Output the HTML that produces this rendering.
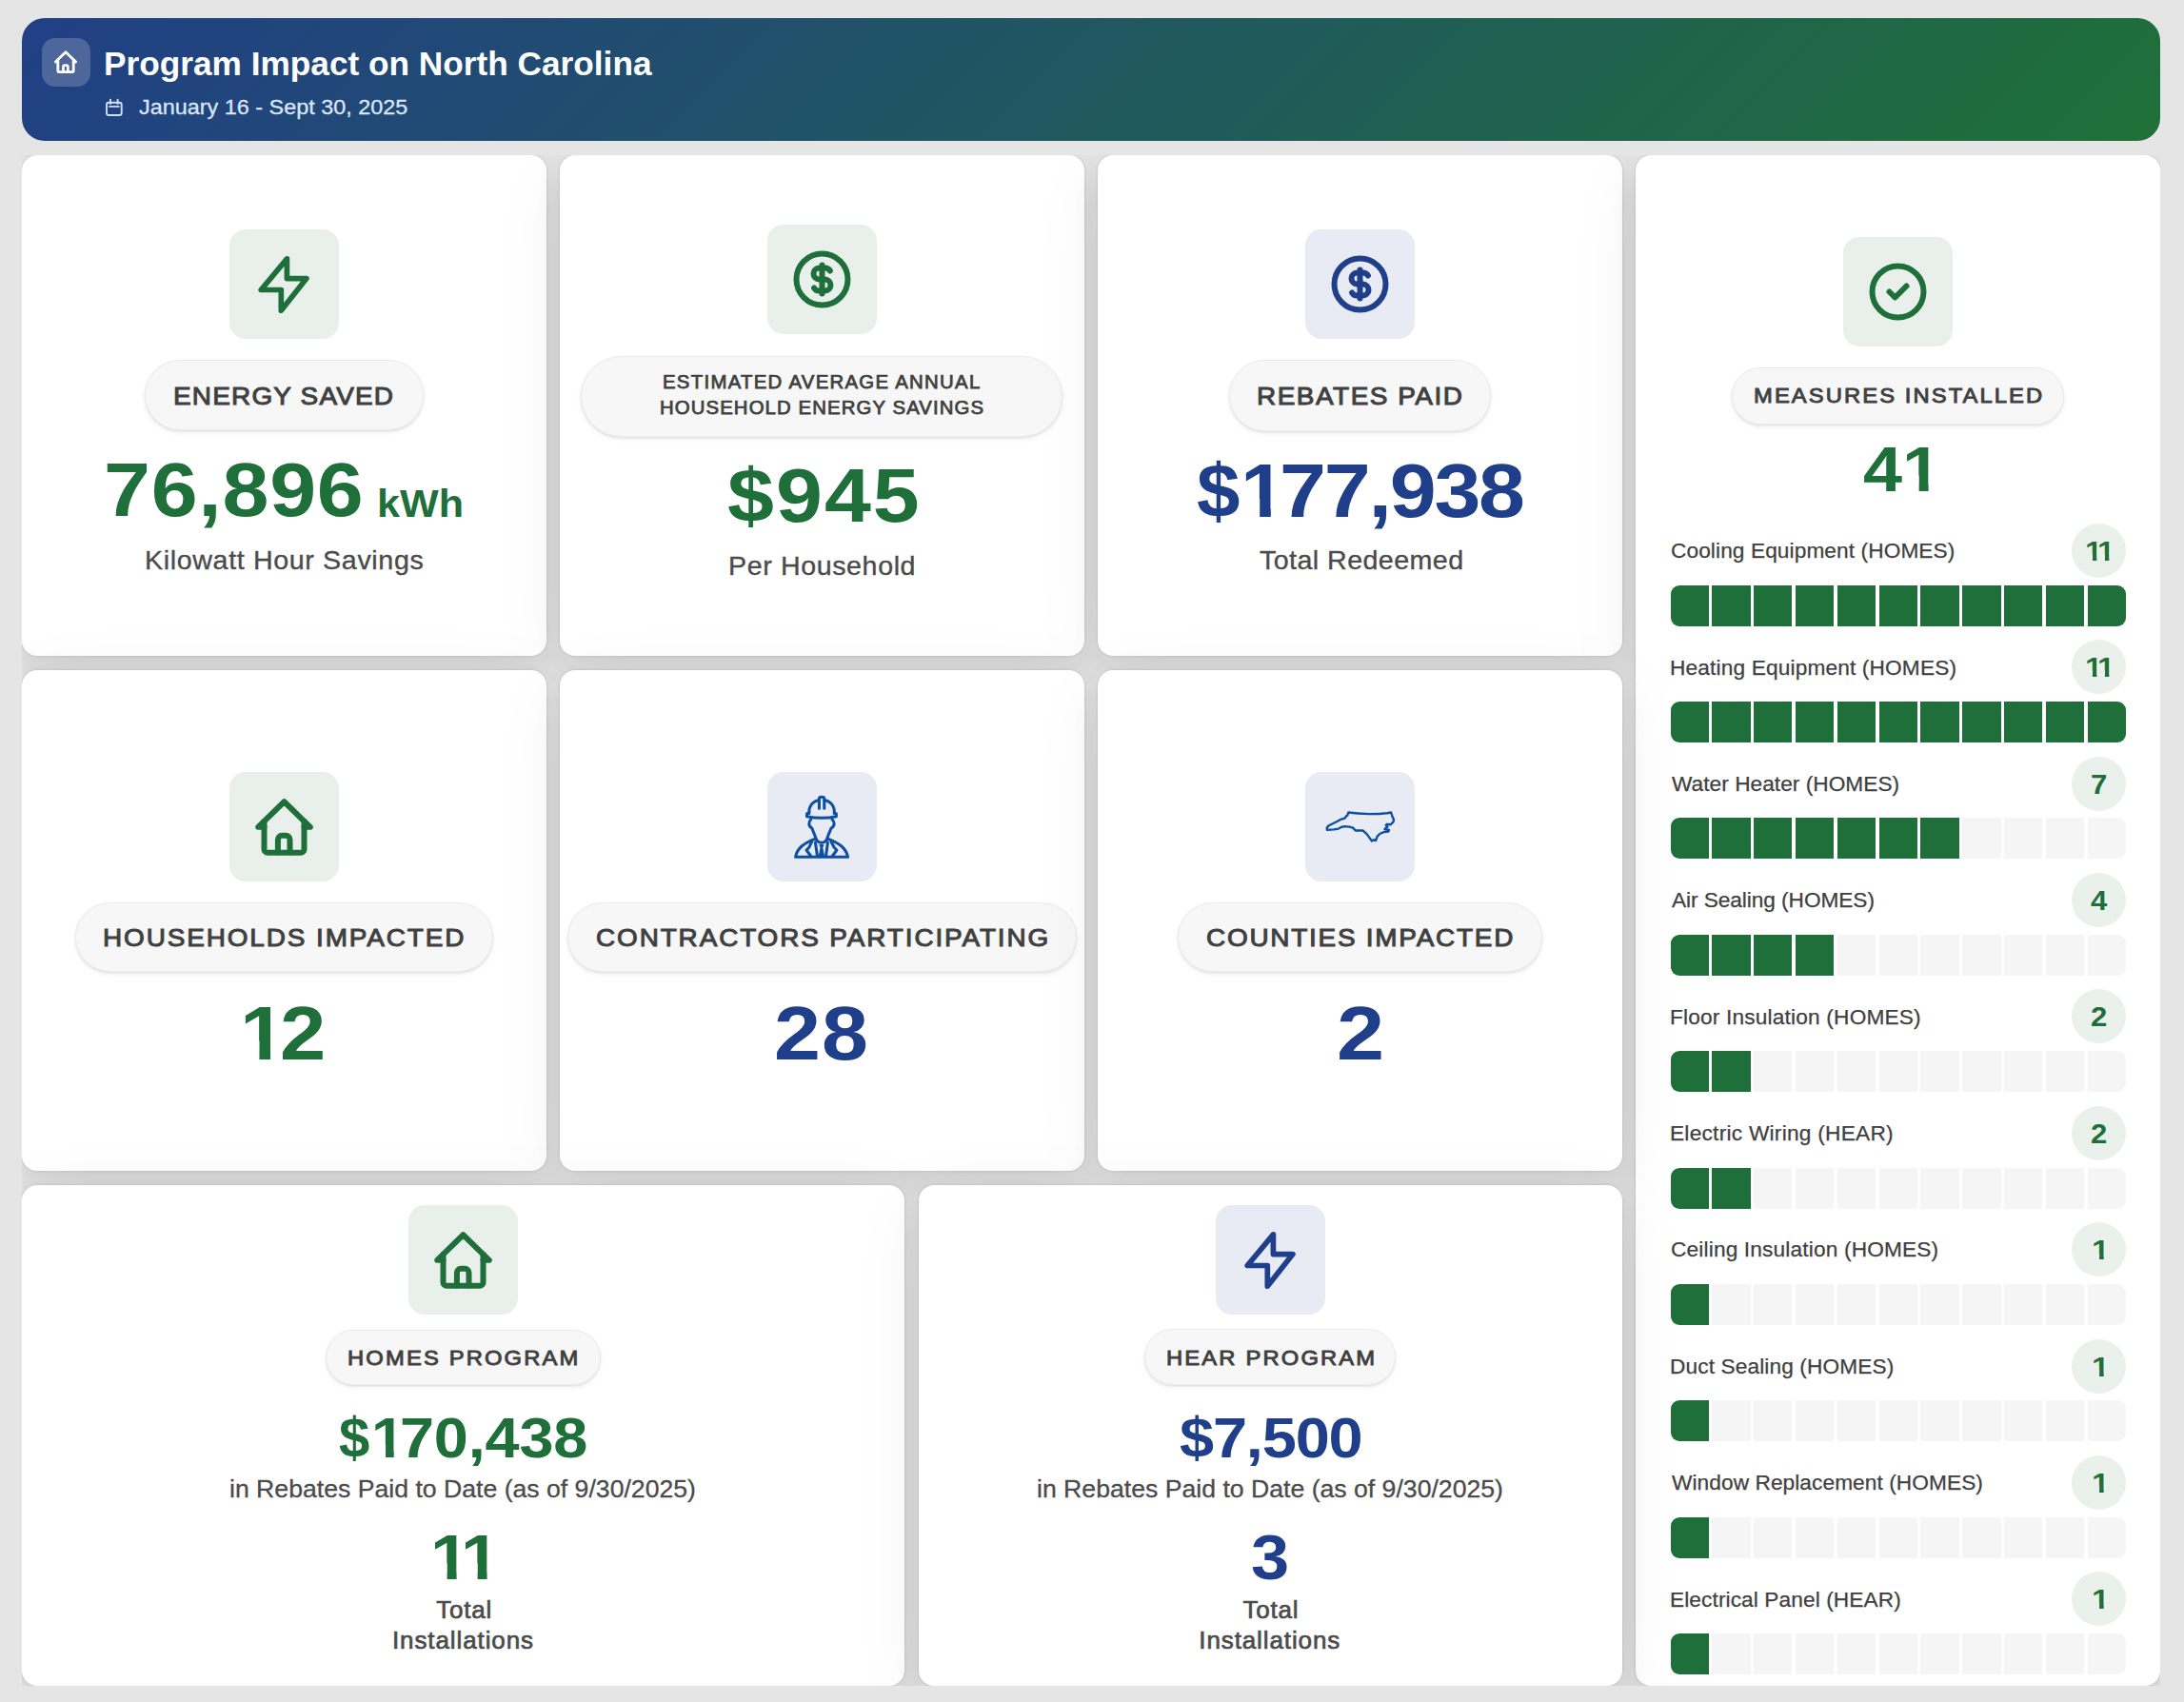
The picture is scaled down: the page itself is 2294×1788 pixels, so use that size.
<!DOCTYPE html>
<html lang="en"><head><meta charset="utf-8"><title>Program Impact on North Carolina</title>
<style>
*{box-sizing:border-box;margin:0;padding:0}
html,body{width:2294px;height:1788px;overflow:hidden;background:#e5e5e5;font-family:"Liberation Sans",Arial,sans-serif}
body{position:relative}
.hdr{position:absolute;left:23px;top:19px;width:2246px;height:129px;border-radius:24px;
 background:linear-gradient(135deg,#213f86 0%,#1f7038 100%);}
.hicon{position:absolute;width:51px;height:51px;border-radius:14px;background:rgba(255,255,255,.2)}
.hicon svg{position:absolute;left:11.4px;top:11.4px;width:28px;height:28px}
.cal{position:absolute;width:22px;height:22px}
.cal svg{width:22px;height:22px;display:block}
.grid{position:absolute;left:23px;top:163px;width:2246px;height:1608px;overflow:hidden}
.card{position:absolute;border-radius:16px;background:#fff;
 box-shadow:0 16px 32px rgba(0,0,0,.06),0 14px 80px rgba(0,0,0,.05),0 0 3px rgba(0,0,0,.15)}
.pill{position:absolute;border-radius:999px;background:#f7f7f7;border:1.5px solid #ececec;box-shadow:0 1.5px 2.5px rgba(0,0,0,.09),0 3px 7px rgba(0,0,0,.04)}
.ibox{position:absolute;width:115px;height:115px;border-radius:17px}
.ibox svg{position:absolute;left:0;top:0;width:115px;height:115px}
.t{position:absolute;white-space:pre;line-height:1;transform-origin:0 0}
.badge{position:absolute;width:57px;height:57px;border-radius:50%;background:#eaf1ec}
.bar{position:absolute;width:478.5px;height:43px;border-radius:9px;overflow:hidden;display:flex;gap:3.5px}
.bar i{flex:1;background:#f5f5f5;display:block}
.bar i.on{background:#1f6f3a}

</style></head><body>
<header class="hdr">
<div class="hicon" style="left:21px;top:21px"><svg viewBox="0 0 24 24" fill="none" stroke="#fff" stroke-width="2.4" stroke-linecap="round" stroke-linejoin="round"><path d="M5 12.1H2.9L12 3.25l9.1 8.85H19"/><path d="M5 10.2V19.9a1.2 1.2 0 0 0 1.2 1.2h11.6a1.2 1.2 0 0 0 1.2-1.2V10.2"/><path d="M9.8 21v-4.5a1.4 1.4 0 0 1 1.4-1.4h1.4a1.4 1.4 0 0 1 1.4 1.4V21"/></svg></div>
<span class="t" style="left:86px;top:30.7px;font-size:35.5px;font-weight:700;color:#fff;transform:scaleX(0.9924);">Program Impact on North Carolina</span>
<div class="cal" style="left:86px;top:83px"><svg viewBox="0 0 22 22" fill="none" stroke="#cfe0ff" stroke-width="1.9" stroke-linecap="round" stroke-linejoin="round"><rect x="3" y="5.7" width="15.7" height="13.3" rx="2.2"/><path d="M7 2.6v4.4M14.6 2.6v4.4M6 9.9h9.8"/></svg></div>
<span class="t" style="left:123.2px;top:82.7px;font-size:21.8px;font-weight:400;color:#dbe6fb;transform:scaleX(1.0737);-webkit-text-stroke:0.3px #dbe6fb;">January 16 - Sept 30, 2025</span>
</header>
<main class="grid">
<section class="card" style="left:0px;top:0px;width:551px;height:526px">
<div class="ibox" style="left:218px;top:78px;background:#e9f0eb;color:#1f6f3a"><svg viewBox="0 0 115 115" fill="none" stroke="currentColor" stroke-width="5.7" stroke-linecap="round" stroke-linejoin="round"><path d="M60.4 30.9L33.2 63.5H54.3V85.2L80.9 51.6H60.4z"/></svg></div>
<div class="pill" style="left:129.4px;top:215px;width:292.4px;height:74.3px"></div>
<span class="t" style="left:158.6px;top:239.5px;font-size:26.6px;font-weight:400;color:#404040;letter-spacing:1.147px;transform:scaleX(1.0500);-webkit-text-stroke:1.0px #404040;">ENERGY SAVED</span>
<span class="t" style="left:85.6px;top:312px;font-size:80px;font-weight:700;color:#1f6f3a;letter-spacing:0.655px;transform:scaleX(1.1000);">76,896</span>
<span class="t" style="left:373.2px;top:345.5px;font-size:41px;font-weight:700;color:#1f6f3a;transform:scaleX(1.0519);">kWh</span>
<span class="t" style="left:128.6px;top:412.1px;font-size:27.4px;font-weight:400;color:#4b4b4b;letter-spacing:0.611px;transform:scaleX(1.0450);-webkit-text-stroke:0.35px #4b4b4b;">Kilowatt Hour Savings</span>
</section>
<section class="card" style="left:565px;top:0px;width:551px;height:526px">
<div class="ibox" style="left:218.3px;top:73.2px;background:#e9f0eb;color:#1f6f3a"><svg viewBox="0 0 115 115" fill="none" stroke="currentColor" stroke-width="2" stroke-linecap="round" stroke-linejoin="round"><g transform="translate(21.5 21.5) scale(3)"><circle cx="12" cy="12" r="9"/><path d="M14.8 9a2 2 0 0 0-1.8-1h-2a2 2 0 1 0 0 4h2a2 2 0 1 1 0 4h-2a2 2 0 0 1-1.8-1"/><path d="M12 7v10"/></g></svg></div>
<div class="pill" style="left:21.7px;top:210.5px;width:506.2px;height:85.2px"></div>
<span class="t" style="left:107.9px;top:228.9px;font-size:19.4px;font-weight:400;color:#404040;letter-spacing:1.226px;transform:scaleX(1.0500);-webkit-text-stroke:0.75px #404040;">ESTIMATED AVERAGE ANNUAL</span>
<span class="t" style="left:104.6px;top:255.9px;font-size:19.4px;font-weight:400;color:#404040;letter-spacing:1.041px;transform:scaleX(1.0500);-webkit-text-stroke:0.75px #404040;">HOUSEHOLD ENERGY SAVINGS</span>
<span class="t" style="left:175.6px;top:317.8px;font-size:80px;font-weight:700;color:#1f6f3a;letter-spacing:1.818px;transform:scaleX(1.1000);">$945</span>
<span class="t" style="left:177.1px;top:418.1px;font-size:27.4px;font-weight:400;color:#4b4b4b;letter-spacing:0.573px;transform:scaleX(1.0450);-webkit-text-stroke:0.35px #4b4b4b;">Per Household</span>
</section>
<section class="card" style="left:1130px;top:0px;width:551px;height:526px">
<div class="ibox" style="left:218px;top:78px;background:#e8eaf4;color:#1f3f8a"><svg viewBox="0 0 115 115" fill="none" stroke="currentColor" stroke-width="2" stroke-linecap="round" stroke-linejoin="round"><g transform="translate(21.5 21.5) scale(3)"><circle cx="12" cy="12" r="9"/><path d="M14.8 9a2 2 0 0 0-1.8-1h-2a2 2 0 1 0 0 4h2a2 2 0 1 1 0 4h-2a2 2 0 0 1-1.8-1"/><path d="M12 7v10"/></g></svg></div>
<div class="pill" style="left:137.8px;top:215px;width:275.5px;height:74.5px"></div>
<span class="t" style="left:166.6px;top:239.6px;font-size:26.6px;font-weight:400;color:#404040;letter-spacing:1.450px;transform:scaleX(1.0500);-webkit-text-stroke:1.0px #404040;">REBATES PAID</span>
<span class="w"><span class="t" style="left:104.2px;top:312.8px;font-size:80px;font-weight:700;color:#1f3f8a;transform:scaleX(1.0214);">$</span><span class="t" style="left:150.2px;top:312.8px;font-size:80px;font-weight:700;color:#1f3f8a;transform:scaleX(1.0656);clip-path:polygon(0 0,29.84px 0,29.84px 96.0px,18.96px 96.0px,18.96px 48.0px,0 48.0px);">1</span><span class="t" style="left:191px;top:312.8px;font-size:80px;font-weight:700;color:#1f3f8a;letter-spacing:-2.018px;transform:scaleX(1.1000);">77,938</span></span>
<span class="t" style="left:169.5px;top:412.2px;font-size:27.4px;font-weight:400;color:#4b4b4b;letter-spacing:0.419px;transform:scaleX(1.0450);-webkit-text-stroke:0.35px #4b4b4b;">Total Redeemed</span>
</section>
<section class="card tall" style="left:1695px;top:0px;width:551px;height:1608px">
<div class="ibox" style="left:218px;top:86px;background:#e9f0eb;color:#1f6f3a"><svg viewBox="0 0 115 115" fill="none" stroke="currentColor" stroke-width="2" stroke-linecap="round" stroke-linejoin="round"><g transform="translate(21.5 21.5) scale(3)"><circle cx="12" cy="12" r="9"/><path d="M9 12l2 2l4-4"/></g></svg></div>
<div class="pill" style="left:101px;top:223px;width:349.0px;height:60.3px"></div>
<span class="t" style="left:123.7px;top:242.2px;font-size:22.2px;font-weight:400;color:#404040;letter-spacing:1.970px;transform:scaleX(1.0700);-webkit-text-stroke:0.9px #404040;">MEASURES INSTALLED</span>
<span class="w"><span class="t" style="left:239.3px;top:296.2px;font-size:67px;font-weight:700;color:#1f6f3a;transform:scaleX(1.1028);">4</span><span class="t" style="left:279.7px;top:296.2px;font-size:67px;font-weight:700;color:#1f6f3a;transform:scaleX(1.1108);clip-path:polygon(0 0,24.99px 0,24.99px 80.4px,15.88px 80.4px,15.88px 40.2px,0 40.2px);">1</span></span>
<div class="badge" style="left:458px;top:386.9px"></div>
<span class="w"><span class="t" style="left:471.5px;top:401.9px;font-size:28.8px;font-weight:700;color:#1f6f3a;transform:scaleX(1.1612);clip-path:polygon(0 0,10.74px 0,10.74px 34.6px,6.83px 34.6px,6.83px 17.3px,0 17.3px);">1</span><span class="t" style="left:485.4px;top:401.9px;font-size:28.8px;font-weight:700;color:#1f6f3a;transform:scaleX(1.1612);clip-path:polygon(0 0,10.74px 0,10.74px 34.6px,6.83px 34.6px,6.83px 17.3px,0 17.3px);">1</span></span>
<span class="t" style="left:36.7px;top:405.1px;font-size:21.8px;font-weight:400;color:#404040;letter-spacing:0.091px;transform:scaleX(1.0400);-webkit-text-stroke:0.25px #404040;">Cooling Equipment (HOMES)</span>
<div class="bar" style="left:36.5px;top:451.6px"><i class="on"></i><i class="on"></i><i class="on"></i><i class="on"></i><i class="on"></i><i class="on"></i><i class="on"></i><i class="on"></i><i class="on"></i><i class="on"></i><i class="on"></i></div>
<div class="badge" style="left:458px;top:509.3px"></div>
<span class="t" style="left:35.6px;top:527.5px;font-size:21.8px;font-weight:400;color:#404040;letter-spacing:0.147px;transform:scaleX(1.0400);-webkit-text-stroke:0.25px #404040;">Heating Equipment (HOMES)</span>
<span class="w"><span class="t" style="left:471.5px;top:524.3px;font-size:28.8px;font-weight:700;color:#1f6f3a;transform:scaleX(1.1612);clip-path:polygon(0 0,10.74px 0,10.74px 34.6px,6.83px 34.6px,6.83px 17.3px,0 17.3px);">1</span><span class="t" style="left:485.4px;top:524.3px;font-size:28.8px;font-weight:700;color:#1f6f3a;transform:scaleX(1.1612);clip-path:polygon(0 0,10.74px 0,10.74px 34.6px,6.83px 34.6px,6.83px 17.3px,0 17.3px);">1</span></span>
<div class="bar" style="left:36.5px;top:574px"><i class="on"></i><i class="on"></i><i class="on"></i><i class="on"></i><i class="on"></i><i class="on"></i><i class="on"></i><i class="on"></i><i class="on"></i><i class="on"></i><i class="on"></i></div>
<div class="badge" style="left:458px;top:631.6px"></div>
<span class="t" style="left:37.7px;top:649.9px;font-size:21.8px;font-weight:400;color:#404040;letter-spacing:0.034px;transform:scaleX(1.0400);-webkit-text-stroke:0.25px #404040;">Water Heater (HOMES)</span>
<span class="t" style="left:477.8px;top:646.6px;font-size:28.8px;font-weight:700;color:#1f6f3a;transform:scaleX(1.0800);">7</span>
<div class="bar" style="left:36.5px;top:696.3px"><i class="on"></i><i class="on"></i><i class="on"></i><i class="on"></i><i class="on"></i><i class="on"></i><i class="on"></i><i class=""></i><i class=""></i><i class=""></i><i class=""></i></div>
<div class="badge" style="left:458px;top:754px"></div>
<span class="t" style="left:477.8px;top:768.9px;font-size:28.8px;font-weight:700;color:#1f6f3a;transform:scaleX(1.0800);">4</span>
<span class="t" style="left:37.7px;top:772.3px;font-size:21.8px;font-weight:400;color:#404040;letter-spacing:-0.064px;transform:scaleX(1.0400);-webkit-text-stroke:0.25px #404040;">Air Sealing (HOMES)</span>
<div class="bar" style="left:36.5px;top:818.7px"><i class="on"></i><i class="on"></i><i class="on"></i><i class="on"></i><i class=""></i><i class=""></i><i class=""></i><i class=""></i><i class=""></i><i class=""></i><i class=""></i></div>
<div class="badge" style="left:458px;top:876.4px"></div>
<span class="t" style="left:35.6px;top:894.6px;font-size:21.8px;font-weight:400;color:#404040;letter-spacing:0.174px;transform:scaleX(1.0400);-webkit-text-stroke:0.25px #404040;">Floor Insulation (HOMES)</span>
<span class="t" style="left:477.8px;top:891.3px;font-size:28.8px;font-weight:700;color:#1f6f3a;transform:scaleX(1.0800);">2</span>
<div class="bar" style="left:36.5px;top:941.1px"><i class="on"></i><i class="on"></i><i class=""></i><i class=""></i><i class=""></i><i class=""></i><i class=""></i><i class=""></i><i class=""></i><i class=""></i><i class=""></i></div>
<div class="badge" style="left:458px;top:998.8px"></div>
<span class="t" style="left:477.8px;top:1013.7px;font-size:28.8px;font-weight:700;color:#1f6f3a;transform:scaleX(1.0800);">2</span>
<span class="t" style="left:35.6px;top:1017px;font-size:21.8px;font-weight:400;color:#404040;letter-spacing:0.244px;transform:scaleX(1.0400);-webkit-text-stroke:0.25px #404040;">Electric Wiring (HEAR)</span>
<div class="bar" style="left:36.5px;top:1063.5px"><i class="on"></i><i class="on"></i><i class=""></i><i class=""></i><i class=""></i><i class=""></i><i class=""></i><i class=""></i><i class=""></i><i class=""></i><i class=""></i></div>
<div class="badge" style="left:458px;top:1121.1px"></div>
<span class="t" style="left:36.7px;top:1139.4px;font-size:21.8px;font-weight:400;color:#404040;letter-spacing:0.152px;transform:scaleX(1.0400);-webkit-text-stroke:0.25px #404040;">Ceiling Insulation (HOMES)</span>
<span class="t" style="left:478.6px;top:1136.1px;font-size:28.8px;font-weight:700;color:#1f6f3a;transform:scaleX(1.1840);clip-path:polygon(0 0,10.74px 0,10.74px 34.6px,6.83px 34.6px,6.83px 17.3px,0 17.3px);">1</span>
<div class="bar" style="left:36.5px;top:1185.8px"><i class="on"></i><i class=""></i><i class=""></i><i class=""></i><i class=""></i><i class=""></i><i class=""></i><i class=""></i><i class=""></i><i class=""></i><i class=""></i></div>
<div class="badge" style="left:458px;top:1243.5px"></div>
<span class="t" style="left:35.6px;top:1261.7px;font-size:21.8px;font-weight:400;color:#404040;letter-spacing:0.109px;transform:scaleX(1.0400);-webkit-text-stroke:0.25px #404040;">Duct Sealing (HOMES)</span>
<span class="t" style="left:478.6px;top:1258.5px;font-size:28.8px;font-weight:700;color:#1f6f3a;transform:scaleX(1.1840);clip-path:polygon(0 0,10.74px 0,10.74px 34.6px,6.83px 34.6px,6.83px 17.3px,0 17.3px);">1</span>
<div class="bar" style="left:36.5px;top:1308.2px"><i class="on"></i><i class=""></i><i class=""></i><i class=""></i><i class=""></i><i class=""></i><i class=""></i><i class=""></i><i class=""></i><i class=""></i><i class=""></i></div>
<div class="badge" style="left:458px;top:1365.9px"></div>
<span class="t" style="left:478.6px;top:1380.9px;font-size:28.8px;font-weight:700;color:#1f6f3a;transform:scaleX(1.1840);clip-path:polygon(0 0,10.74px 0,10.74px 34.6px,6.83px 34.6px,6.83px 17.3px,0 17.3px);">1</span>
<span class="t" style="left:37.7px;top:1384.1px;font-size:21.8px;font-weight:400;color:#404040;letter-spacing:0.072px;transform:scaleX(1.0400);-webkit-text-stroke:0.25px #404040;">Window Replacement (HOMES)</span>
<div class="bar" style="left:36.5px;top:1430.6px"><i class="on"></i><i class=""></i><i class=""></i><i class=""></i><i class=""></i><i class=""></i><i class=""></i><i class=""></i><i class=""></i><i class=""></i><i class=""></i></div>
<div class="badge" style="left:458px;top:1488.2px"></div>
<span class="t" style="left:35.6px;top:1506.5px;font-size:21.8px;font-weight:400;color:#404040;letter-spacing:0.095px;transform:scaleX(1.0400);-webkit-text-stroke:0.25px #404040;">Electrical Panel (HEAR)</span>
<span class="t" style="left:478.6px;top:1503.3px;font-size:28.8px;font-weight:700;color:#1f6f3a;transform:scaleX(1.1840);clip-path:polygon(0 0,10.74px 0,10.74px 34.6px,6.83px 34.6px,6.83px 17.3px,0 17.3px);">1</span>
<div class="bar" style="left:36.5px;top:1552.9px"><i class="on"></i><i class=""></i><i class=""></i><i class=""></i><i class=""></i><i class=""></i><i class=""></i><i class=""></i><i class=""></i><i class=""></i><i class=""></i></div>
</section>
<section class="card" style="left:0px;top:541px;width:551px;height:526px">
<div class="ibox" style="left:218px;top:107px;background:#e9f0eb;color:#1f6f3a"><svg viewBox="0 0 115 115" fill="none" stroke="currentColor" stroke-width="2" stroke-linecap="round" stroke-linejoin="round"><g transform="translate(21.5 21.5) scale(3)"><path d="M5 12.1H2.9L12 3.25l9.1 8.85H19"/><path d="M5 10.2V19.9a1.2 1.2 0 0 0 1.2 1.2h11.6a1.2 1.2 0 0 0 1.2-1.2V10.2"/><path d="M9.8 21v-4.5a1.4 1.4 0 0 1 1.4-1.4h1.4a1.4 1.4 0 0 1 1.4 1.4V21"/></g></svg></div>
<div class="pill" style="left:55.6px;top:244.2px;width:439.0px;height:73.3px"></div>
<span class="t" style="left:84.9px;top:268px;font-size:26.6px;font-weight:400;color:#404040;letter-spacing:1.794px;transform:scaleX(1.0500);-webkit-text-stroke:1.0px #404040;">HOUSEHOLDS IMPACTED</span>
<span class="w"><span class="t" style="left:229.1px;top:341.5px;font-size:80px;font-weight:700;color:#1f6f3a;transform:scaleX(1.0779);clip-path:polygon(0 0,29.84px 0,29.84px 96.0px,18.96px 96.0px,18.96px 48.0px,0 48.0px);">1</span><span class="t" style="left:270.6px;top:341.5px;font-size:80px;font-weight:700;color:#1f6f3a;transform:scaleX(1.0842);">2</span></span>
</section>
<section class="card" style="left:565px;top:541px;width:551px;height:526px">
<div class="ibox" style="left:218.3px;top:107px;background:#e8eaf4;color:#1f3f8a"><svg viewBox="0 0 115 115" fill="none" stroke="#0d4fa3" stroke-width="37" stroke-linecap="round" stroke-linejoin="round"><g transform="scale(0.08226) translate(-135 -133)">
<path d="M797 598V472Q797 452 828 452Q862 452 862 472V598"/>
<path d="M668 660C662 565 720 508 795 492"/>
<path d="M864 492C940 508 996 565 990 660"/>
<path d="M655 660H668M990 660H1002Q1015 660 1015 675V700Q925 720 828 720Q735 720 640 700V675Q640 660 655 660"/>
<path d="M692 738Q668 762 668 792Q668 830 704 850L748 960Q765 1036 828 1036Q890 1036 905 960L950 850Q988 830 988 792Q988 762 962 738"/>
<path d="M742 988C610 1040 515 1100 495 1218H1163C1140 1100 1045 1040 912 988"/>
<path d="M702 1024L668 1096L634 1130L694 1212"/>
<path d="M950 1024L988 1096L1022 1130L962 1212"/>
<path d="M748 1034L774 1212"/>
<path d="M906 1034L882 1212"/>
<path d="M805 1064H850L838 1100L858 1208H795L816 1100z" fill="#0d4fa3" stroke-width="12"/>
</g></svg></div>
<div class="pill" style="left:7.7px;top:244.2px;width:535.3px;height:73.3px"></div>
<span class="t" style="left:38.2px;top:268px;font-size:26.6px;font-weight:400;color:#404040;letter-spacing:1.784px;transform:scaleX(1.0500);-webkit-text-stroke:1.0px #404040;">CONTRACTORS PARTICIPATING</span>
<span class="t" style="left:224.7px;top:342.2px;font-size:80px;font-weight:700;color:#1f3f8a;letter-spacing:1.000px;transform:scaleX(1.1000);">28</span>
</section>
<section class="card" style="left:1130px;top:541px;width:551px;height:526px">
<div class="ibox" style="left:218px;top:107px;background:#e8eaf4;color:#1f3f8a"><svg viewBox="0 0 115 115" fill="none" stroke="#0d4fa3" stroke-width="29" stroke-linecap="round" stroke-linejoin="round"><g transform="scale(0.08226) translate(-135 -138)">
<path d="M685 655Q800 670 950 675Q1100 674 1180 664L1230 655L1245 700L1265 745L1260 775L1225 810L1180 805L1165 815L1185 840L1160 855L1150 870L1205 880L1195 900L1140 905L1090 925L1055 960L1035 1015L1010 1005L985 1020L960 985L920 930L870 885H775L760 870L745 850L700 838L640 832L600 840L560 862L500 872L415 878L410 855L430 825L480 800L540 770L585 745L640 730L660 700L675 690z"/>
</g></svg></div>
<div class="pill" style="left:84px;top:244.2px;width:382.8px;height:73.3px"></div>
<span class="t" style="left:114px;top:268px;font-size:26.6px;font-weight:400;color:#404040;letter-spacing:1.670px;transform:scaleX(1.0500);-webkit-text-stroke:1.0px #404040;">COUNTIES IMPACTED</span>
<span class="t" style="left:250.6px;top:342.2px;font-size:80px;font-weight:700;color:#1f3f8a;transform:scaleX(1.1263);">2</span>
</section>
<section class="card" style="left:0px;top:1082px;width:927px;height:526px">
<div class="ibox" style="left:406px;top:21.3px;background:#e9f0eb;color:#1f6f3a"><svg viewBox="0 0 115 115" fill="none" stroke="currentColor" stroke-width="2" stroke-linecap="round" stroke-linejoin="round"><g transform="translate(21.5 21.5) scale(3)"><path d="M5 12.1H2.9L12 3.25l9.1 8.85H19"/><path d="M5 10.2V19.9a1.2 1.2 0 0 0 1.2 1.2h11.6a1.2 1.2 0 0 0 1.2-1.2V10.2"/><path d="M9.8 21v-4.5a1.4 1.4 0 0 1 1.4-1.4h1.4a1.4 1.4 0 0 1 1.4 1.4V21"/></g></svg></div>
<div class="pill" style="left:319.2px;top:151.6px;width:288.9px;height:58.1px"></div>
<span class="t" style="left:342.1px;top:170.5px;font-size:22.2px;font-weight:400;color:#404040;letter-spacing:2.025px;transform:scaleX(1.0700);-webkit-text-stroke:0.9px #404040;">HOMES PROGRAM</span>
<span class="w"><span class="t" style="left:333.4px;top:236.9px;font-size:59px;font-weight:700;color:#1f6f3a;transform:scaleX(0.9839);">$</span><span class="t" style="left:366.7px;top:236.9px;font-size:59px;font-weight:700;color:#1f6f3a;transform:scaleX(1.0781);clip-path:polygon(0 0,22.01px 0,22.01px 70.8px,13.98px 70.8px,13.98px 35.4px,0 35.4px);">1</span><span class="t" style="left:396.9px;top:236.9px;font-size:59px;font-weight:700;color:#1f6f3a;letter-spacing:-0.200px;transform:scaleX(1.1000);">70,438</span></span>
<span class="t" style="left:217.8px;top:307.2px;font-size:25.1px;font-weight:400;color:#4b4b4b;transform:scaleX(1.0611);-webkit-text-stroke:0.3px #4b4b4b;">in Rebates Paid to Date (as of 9/30/2025)</span>
<span class="w"><span class="t" style="left:428.7px;top:357.2px;font-size:67px;font-weight:700;color:#1f6f3a;transform:scaleX(1.1108);clip-path:polygon(0 0,24.99px 0,24.99px 80.4px,15.88px 80.4px,15.88px 40.2px,0 40.2px);">1</span><span class="t" style="left:461px;top:357.2px;font-size:67px;font-weight:700;color:#1f6f3a;transform:scaleX(1.1108);clip-path:polygon(0 0,24.99px 0,24.99px 80.4px,15.88px 80.4px,15.88px 40.2px,0 40.2px);">1</span></span>
<span class="t" style="left:435.2px;top:433.3px;font-size:26px;font-weight:400;color:#4b4b4b;letter-spacing:0.775px;-webkit-text-stroke:0.7px #4b4b4b;">Total</span>
<span class="t" style="left:389px;top:465.4px;font-size:26px;font-weight:400;color:#4b4b4b;letter-spacing:0.892px;-webkit-text-stroke:0.7px #4b4b4b;">Installations</span>
</section>
<section class="card" style="left:942px;top:1082px;width:739px;height:526px">
<div class="ibox" style="left:312px;top:21.3px;background:#e8eaf4;color:#1f3f8a"><svg viewBox="0 0 115 115" fill="none" stroke="currentColor" stroke-width="5.7" stroke-linecap="round" stroke-linejoin="round"><path d="M60.4 30.9L33.2 63.5H54.3V85.2L80.9 51.6H60.4z"/></svg></div>
<div class="pill" style="left:237px;top:151.3px;width:263.5px;height:59.0px"></div>
<span class="t" style="left:259.9px;top:170.5px;font-size:22.2px;font-weight:400;color:#404040;letter-spacing:2.031px;transform:scaleX(1.0700);-webkit-text-stroke:0.9px #404040;">HEAR PROGRAM</span>
<span class="t" style="left:273.8px;top:236.9px;font-size:59px;font-weight:700;color:#1f3f8a;letter-spacing:-1.055px;transform:scaleX(1.1000);">$7,500</span>
<span class="t" style="left:123.9px;top:307.2px;font-size:25.1px;font-weight:400;color:#4b4b4b;transform:scaleX(1.0611);-webkit-text-stroke:0.3px #4b4b4b;">in Rebates Paid to Date (as of 9/30/2025)</span>
<span class="t" style="left:348.8px;top:357.2px;font-size:67px;font-weight:700;color:#1f3f8a;transform:scaleX(1.0758);">3</span>
<span class="t" style="left:340.6px;top:433.3px;font-size:26px;font-weight:400;color:#4b4b4b;letter-spacing:0.775px;-webkit-text-stroke:0.7px #4b4b4b;">Total</span>
<span class="t" style="left:294.3px;top:465.4px;font-size:26px;font-weight:400;color:#4b4b4b;letter-spacing:0.892px;-webkit-text-stroke:0.7px #4b4b4b;">Installations</span>
</section>
</main>
<script>(function(){var s=window.innerWidth/2294;if(Math.abs(s-1)>0.002){var b=document.body;b.style.transformOrigin='0 0';b.style.transform='scale('+s+')';}})();</script>
</body></html>
